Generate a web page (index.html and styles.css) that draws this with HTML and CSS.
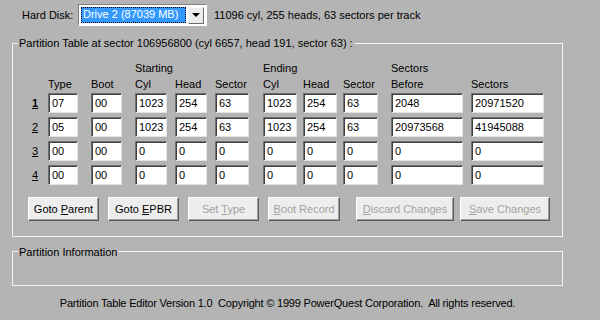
FILE: index.html
```html
<!DOCTYPE html>
<html lang="en">
<head>
    <meta charset="UTF-8">
    <title>Partition Table Editor</title>
    <link rel="stylesheet" href="styles.css">
</head>
<body>
    <div class="dialog">
        <div class="disk-row">
            <span class="disk-label">Hard Disk:</span>
            <div class="combo">
                <span class="combo-value">Drive 2 (87039 MB)</span>
                <span class="combo-btn"><span class="arrow"></span></span>
            </div>
            <span class="disk-info">11096 cyl, 255 heads, 63 sectors per track</span>
        </div>

        <fieldset class="group">
            <legend>Partition Table at sector 106956800 (cyl 6657, head 191, sector 63) :</legend>
            <div class="ptable">
                <div></div>
                <div class="hd">Type</div>
                <div class="hd">Boot</div>
                <div class="hd">Starting<br>Cyl</div>
                <div class="hd">Head</div>
                <div class="hd">Sector</div>
                <div class="hd">Ending<br>Cyl</div>
                <div class="hd">Head</div>
                <div class="hd">Sector</div>
                <div class="hd">Sectors<br>Before</div>
                <div class="hd">Sectors</div>

                <div class="rownum current"><u>1</u></div>
                <input class="w30" value="07">
                <input class="w31" value="00">
                <input class="w32" value="1023">
                <input class="w32" value="254">
                <input class="w34" value="63">
                <input class="w34" value="1023">
                <input class="w34" value="254">
                <input class="w35" value="63">
                <input class="w72" value="2048">
                <input class="w73" value="20971520">

                <div class="rownum"><u>2</u></div>
                <input class="w30" value="05">
                <input class="w31" value="00">
                <input class="w32" value="1023">
                <input class="w32" value="254">
                <input class="w34" value="63">
                <input class="w34" value="1023">
                <input class="w34" value="254">
                <input class="w35" value="63">
                <input class="w72" value="20973568">
                <input class="w73" value="41945088">

                <div class="rownum"><u>3</u></div>
                <input class="w30" value="00">
                <input class="w31" value="00">
                <input class="w32" value="0">
                <input class="w32" value="0">
                <input class="w34" value="0">
                <input class="w34" value="0">
                <input class="w34" value="0">
                <input class="w35" value="0">
                <input class="w72" value="0">
                <input class="w73" value="0">

                <div class="rownum"><u>4</u></div>
                <input class="w30" value="00">
                <input class="w31" value="00">
                <input class="w32" value="0">
                <input class="w32" value="0">
                <input class="w34" value="0">
                <input class="w34" value="0">
                <input class="w34" value="0">
                <input class="w35" value="0">
                <input class="w72" value="0">
                <input class="w73" value="0">
            </div>

            <div class="actions">
                <button class="b71">Goto <u>P</u>arent</button>
                <button class="b71">Goto <u>E</u>PBR</button>
                <button class="b71" disabled>Set <u>T</u>ype</button>
                <button class="b72" disabled><u>B</u>oot Record</button>
                <button class="b98 gap-left" disabled><u>D</u>iscard Changes</button>
                <button class="b90" disabled><u>S</u>ave Changes</button>
            </div>
        </fieldset>

        <fieldset class="group info">
            <legend>Partition Information</legend>
        </fieldset>

        <div class="footer">Partition Table Editor Version 1.0&nbsp; Copyright © 1999 PowerQuest Corporation.&nbsp; All rights reserved.</div>
    </div>
</body>
</html>
```

FILE: styles.css
```css
html, body {
    margin: 0;
    padding: 0;
}

body {
    width: 600px;
    height: 320px;
    background-color: #b4b4b4;
    font-family: "Liberation Sans", Arial, sans-serif;
    font-size: 11px;
    color: #000;
    overflow: hidden;
}

.dialog {
    display: flex;
    flex-direction: column;
}

/* top row */
.disk-row {
    display: flex;
    align-items: center;
    height: 22px;
    margin-top: 4px;
    padding-left: 22px;
}

.disk-label {
    width: 56px;
}

.combo {
    display: flex;
    align-items: center;
    box-sizing: border-box;
    width: 129px;
    height: 22px;
    padding: 2px;
    background-color: #fff;
    border: 1px solid;
    border-color: #808080 #fff #fff #808080;
}

.combo-value {
    flex: 1;
    height: 16px;
    line-height: 15px;
    padding-left: 2px;
    box-sizing: border-box;
    background-color: #3399ff;
    color: #fff;
    outline: 1px dotted #000;
    outline-offset: -1px;
}

.combo-btn {
    display: flex;
    align-items: center;
    justify-content: center;
    box-sizing: border-box;
    width: 16px;
    height: 17px;
    margin-left: 2px;
    background-color: #ececec;
    border: 1px solid;
    border-color: #fff #6d6d6d #6d6d6d #fff;
}

.arrow {
    width: 0;
    height: 0;
    border-left: 4px solid transparent;
    border-right: 4px solid transparent;
    border-top: 4px solid #000;
}

.disk-info {
    margin-left: 7px;
}

/* group boxes */
.group {
    box-sizing: border-box;
    width: 551px;
    min-width: 0;
    margin: 10px 0 0 12px;
    padding: 0 0 15px 0;
    border: 1px solid #f4f4f4;
}

.group legend {
    margin-left: 5px;
    padding: 0 1px;
    line-height: 14px;
}

.group.info {
    margin-top: 6px;
    padding-bottom: 26px;
}

.group.info legend {
    padding-top: 2px;
}

/* partition grid */
.ptable {
    display: grid;
    grid-template-columns: 16px 43px 44px 40px 40px 48px 40px 40px 48px 80px 73px;
    row-gap: 4px;
    margin: 10px 0 0 19px;
}

.hd {
    line-height: 16px;
    align-self: end;
    margin-bottom: -3px;
}

.rownum {
    line-height: 20px;
}

.rownum.current {
    font-weight: bold;
}

.ptable input {
    box-sizing: border-box;
    height: 20px;
    padding: 0 0 0 3px;
    font-family: inherit;
    font-size: 11px;
    background-color: #fff;
    border: 1px solid;
    border-color: #707070 #e4e4e4 #e4e4e4 #707070;
    box-shadow: inset 1px 1px 0 #404040;
    outline: none;
}

.w30 { width: 30px; }
.w31 { width: 31px; }
.w32 { width: 32px; }
.w34 { width: 34px; }
.w35 { width: 35px; }
.w72 { width: 72px; }
.w73 { width: 73px; }

/* buttons */
.actions {
    display: flex;
    gap: 9px;
    margin: 12px 0 0 15px;
}

.actions button {
    box-sizing: border-box;
    height: 24px;
    padding: 0;
    font-family: inherit;
    font-size: 11px;
    color: #000;
    background-color: #ededed;
    border: 1px solid;
    border-color: #fff #5a5a5a #5a5a5a #fff;
    box-shadow: inset -1px -1px 0 #a0a0a0;
}

.actions button:disabled {
    color: #a3a3a3;
}

.b71 { width: 71px; }
.b72 { width: 72px; }
.b98 { width: 98px; }
.b90 { width: 90px; }

.actions .gap-left {
    margin-left: 7px;
}

.actions .b90 {
    margin-left: -3px;
}

.footer {
    width: 551px;
    margin: 10px 0 0 12px;
    text-align: center;
    line-height: 14px;
    letter-spacing: -0.2px;
}
```
